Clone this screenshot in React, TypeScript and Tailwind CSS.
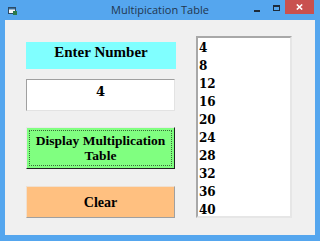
import React from "react";

const serif = { fontFamily: '"DejaVu Serif", "Liberation Serif", serif' };
const times = { fontFamily: '"Liberation Serif", "Times New Roman", serif' };

export default function App() {
  const items = [4, 8, 12, 16, 20, 24, 28, 32, 36, 40];
  return (
    <div className="w-[320px] h-[241px] bg-[#55a6ee] flex flex-col overflow-hidden">
      {/* Title bar */}
      <div className="h-[20px] flex items-start relative">
        <div className="absolute left-[8px] top-[7px]">
          <svg width="9" height="8" viewBox="0 0 9 8">
            <rect x="0.5" y="0.5" width="7" height="6" fill="#f4f6f8" stroke="#2c4b66" />
            <rect x="1" y="1" width="6" height="1.5" fill="#3a6f9a" />
            <rect x="5" y="4" width="4" height="4" fill="#2b7a4b" />
          </svg>
        </div>
        <div
          className="flex-1 text-center text-[11px] leading-[20px] text-[#22364f]"
          style={{ fontFamily: '"Open Sans", "Noto Sans", sans-serif' }}
        >
          Multipication Table
        </div>
        <div className="absolute left-[254px] top-[10px] w-[6px] h-[2px] bg-[#1d2b3a]" />
        <div className="absolute left-[273px] top-[5px] w-[7px] h-[6px] border border-[#1d2b3a] border-t-2" />
        <div className="absolute left-[285px] top-0 w-[29px] h-[14px] bg-[#c9514f] flex items-center justify-center">
          <svg width="7" height="6" viewBox="0 0 7 6">
            <path d="M0.8 0.5 L6.2 5.5 M6.2 0.5 L0.8 5.5" stroke="#ffffff" strokeWidth="1.6" />
          </svg>
        </div>
      </div>
      {/* Client area */}
      <div className="mx-[5px] mb-[6px] flex-1 bg-[#f0f0f0] flex pl-[21px] pt-[16px]">
        <div className="w-[150px] flex flex-col pt-[6px]" style={times}>
          <div className="h-[27px] w-[150px] bg-[#80ffff] text-center font-bold text-[15px] text-black pt-[1px] leading-[18px]">
            Enter Number
          </div>
          <div
            className="mt-[10px] h-[32px] w-[149px] bg-white border border-[#a0a0a0] border-b-[#e3e3e3] border-r-[#e3e3e3] text-center font-bold text-[13px] text-black pt-[4px] leading-[16px]"
            style={serif}
          >
            4
          </div>
          <div className="mt-[16px] h-[42px] w-[149px] bg-[#80ff80] border border-[#e8e8e8] border-b-[#202020] border-r-[#202020] p-[2px]">
            <div className="w-full h-full border border-dotted border-[#3a6a3a] flex flex-col items-center justify-center font-bold text-[13.5px] leading-[15px] text-black whitespace-nowrap">
              <span>Display Multiplication</span>
              <span>Table</span>
            </div>
          </div>
          <div className="mt-[17px] h-[32px] w-[149px] bg-[#ffc080] border border-[#f0e0d0] border-b-[#a0a0a0] border-r-[#a0a0a0] flex items-center justify-center font-bold text-[14px] text-black">
            Clear
          </div>
        </div>
        <div
          className="ml-[20px] w-[96px] h-[182px] bg-white border-2 border-[#a8a8a8] border-b-[#e6e6e6] border-r-[#e6e6e6] pl-[1px] pt-[1px] overflow-hidden"
          style={serif}
        >
          {items.map((n) => (
            <div key={n} className="font-bold text-[12px] leading-[18px] text-black">
              {n}
            </div>
          ))}
        </div>
      </div>
    </div>
  );
}
